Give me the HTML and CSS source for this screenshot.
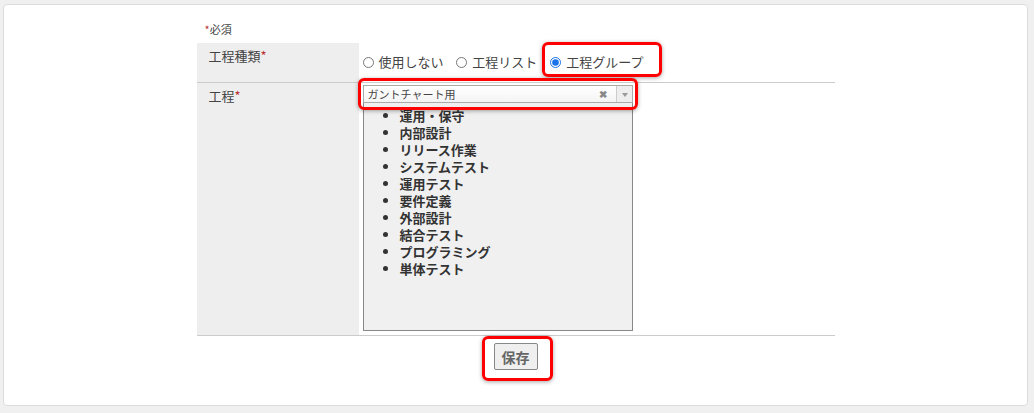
FILE: index.html
```html
<!DOCTYPE html>
<html lang="ja">
<head>
	<meta charset="UTF-8">
	<title>工程設定</title>
	<link rel="stylesheet" href="styles.css">
</head>
<body>
	<div class="panel">
		<div class="form">
			<div class="form-note"><span class="req">*</span>必須</div>
			<div class="form-table">
				<div class="form-row">
					<div class="form-label">工程種類<span class="req">*</span></div>
					<div class="form-value form-radios">
						<label class="radio"><input type="radio" name="kind"> 使用しない</label>
						<label class="radio"><input type="radio" name="kind"> 工程リスト</label>
						<label class="radio mark mark-radio"><input type="radio" name="kind" checked> 工程グループ</label>
					</div>
				</div>
				<div class="form-row">
					<div class="form-label">工程<span class="req">*</span></div>
					<div class="form-value">
						<div class="combo mark mark-combo">
							<span class="combo-text">ガントチャート用</span>
							<span class="combo-clear">&#10006;</span>
							<span class="combo-arrow"></span>
						</div>
						<div class="task-box">
							<ul class="task-list">
								<li>運用・保守</li>
								<li>内部設計</li>
								<li>リリース作業</li>
								<li>システムテスト</li>
								<li>運用テスト</li>
								<li>要件定義</li>
								<li>外部設計</li>
								<li>結合テスト</li>
								<li>プログラミング</li>
								<li>単体テスト</li>
							</ul>
						</div>
					</div>
				</div>
			</div>
			<div class="form-actions">
				<span class="mark mark-btn"><button type="button" class="btn-save">保存</button></span>
			</div>
		</div>
	</div>
</body>
</html>
```

FILE: styles.css
```css
* {padding: 0; margin: 0; box-sizing: border-box;}
body {
	background: #f0f0f0;
	font-family: "Noto Sans CJK JP", "Noto Sans", sans-serif;
	font-size: 13px;
	color: #444;
}
.panel {
	margin: 4px 6px 0 3px;
	height: 402px;
	padding-top: 17px;
	background: #fff;
	border: 1px solid #dcdcdc;
	border-radius: 4px;
}
.form {
	width: 638px;
	margin: 0 auto;
}
.form-note {
	font-size: 11px;
	line-height: 14px;
	padding-left: 8px;
	margin-bottom: 7px;
}
.req {
	color: #b33;
}
.form-row {
	display: grid;
	grid-template-columns: 162px 1fr;
	border-bottom: 1px solid #ccc;
}
.form-row:first-child {
	height: 40px;
}
.form-row:last-child {
	height: 253px;
}
.form-label {
	background: #eee;
	padding: 4px 12px;
	line-height: 18px;
}
.form-value {
	padding: 2px 0 0 4px;
}
.form-radios {
	padding-top: 10px;
	display: flex;
	align-items: center;
	height: 18px;
	box-sizing: content-box;
	line-height: 18px;
}
.radio {
	display: flex;
	align-items: center;
	margin-right: 13px;
	white-space: pre;
}
.radio input {
	width: 11px;
	height: 11px;
	margin: 0 2px 0 0;
	accent-color: #1a73e8;
}
.mark {
	position: relative;
}
.mark::after {
	content: "";
	position: absolute;
	border: 3px solid #f00;
	border-radius: 6px;
	box-shadow: 0 1px 4px rgba(0, 0, 0, .35);
	pointer-events: none;
}
.mark-radio::after {
	top: -11px;
	bottom: -6px;
	left: -8px;
	right: -19px;
}
.combo {
	display: flex;
	align-items: center;
	width: 270px;
	height: 18px;
	border: 1px solid #aaa;
	background: linear-gradient(#fff, #f4f4f4);
	font-size: 11px;
	line-height: 16px;
	color: #444;
}
.mark-combo {
	z-index: 2;
}
.mark-combo::after {
	top: -8px;
	bottom: -8px;
	left: -6px;
	right: -6px;
}
.combo-text {
	flex: 1;
	padding-left: 4px;
}
.combo-clear {
	font-size: 10px;
	font-weight: bold;
	color: #888;
	width: 17px;
}
.combo-arrow {
	width: 16px;
	height: 16px;
	border-left: 1px solid #ccc;
	background: #eee;
	position: relative;
}
.combo-arrow::before {
	content: "";
	position: absolute;
	left: 5px;
	top: 7px;
	border: 3px solid transparent;
	border-top: 4px solid #999;
}
.task-box {
	width: 270px;
	height: 229px;
	margin-top: -1px;
	border: 1px solid #888;
	background: #f0f0f0;
	overflow: hidden;
}
.task-list {
	padding: 4px 0 0 36px;
	font-weight: bold;
	line-height: 17px;
	color: #333;
}
.form-actions {
	display: flex;
	justify-content: center;
	padding-top: 7px;
}
.mark-btn::after {
	top: -7px;
	bottom: -11px;
	left: -12px;
	right: -15px;
}
.btn-save {
	display: block;
	width: 44px;
	height: 27px;
	font-family: inherit;
	font-size: 14px;
	font-weight: bold;
	color: #666;
	background: #efefef;
	border: 1px solid #888;
	border-radius: 2px;
}
```
